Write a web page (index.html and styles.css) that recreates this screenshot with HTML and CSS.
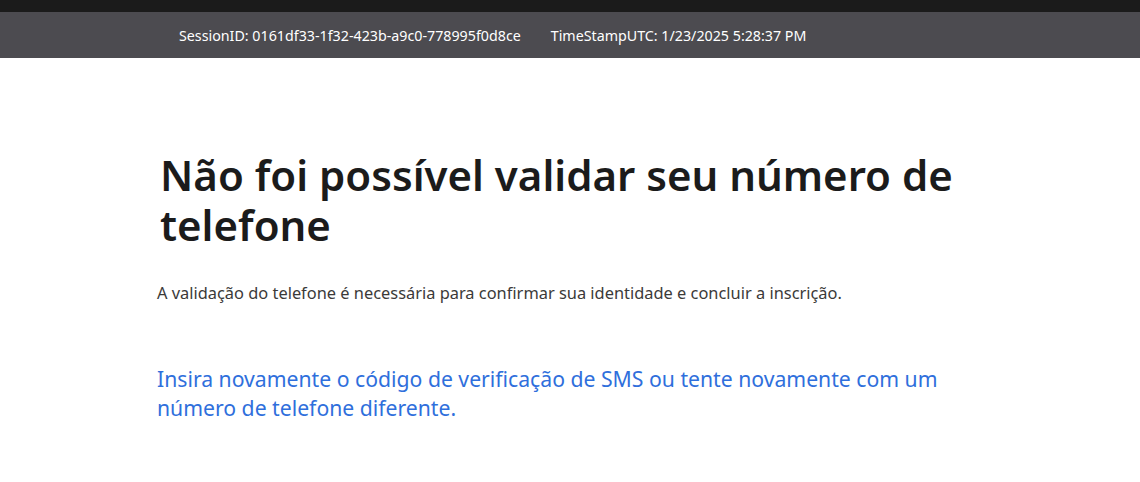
FILE: index.html
```html
<!DOCTYPE html>
<html lang="pt-BR">
<head>
<meta charset="utf-8">
<title>Validação de telefone</title>
<link rel="stylesheet" href="styles.css">
</head>
<body>
<header class="topbar">
  <div class="topbar-strip"></div>
  <div class="session-bar">
    <span class="session-item">SessionID: 0161df33-1f32-423b-a9c0-778995f0d8ce</span>
    <span class="session-item">TimeStampUTC: 1/23/2025 5:28:37 PM</span>
  </div>
</header>
<main class="content">
  <h1 class="title">Não foi possível validar seu número de telefone</h1>
  <p class="desc">A validação do telefone é necessária para confirmar sua identidade e concluir a inscrição.</p>
  <p class="retry">Insira novamente o código de verificação de SMS ou tente novamente com um número de telefone diferente.</p>
</main>
</body>
</html>
```

FILE: styles.css
```css
html, body {
  margin: 0;
  padding: 0;
  background: #ffffff;
  font-family: "Noto Sans", "Open Sans", sans-serif;
}

.topbar-strip {
  height: 12px;
  background: #1b1b1b;
}

.session-bar {
  height: 46px;
  background: #4c4b50;
  display: flex;
  align-items: center;
  gap: 30px;
  padding-left: 179px;
  color: #ffffff;
  font-size: 14.25px;
}

.content {
  padding-left: 157px;
  width: 810px;
}

.title {
  margin: 92px 0 0 3px;
  font-size: 42px;
  line-height: 50px;
  font-weight: 600;
  color: #1b1b1b;
}

.desc {
  margin: 32px 0 0 0;
  font-size: 16.4px;
  line-height: 22px;
  color: #3b3a39;
}

.retry {
  margin: 60px 0 0 0;
  font-size: 21.2px;
  line-height: 29px;
  color: #2f6fdc;
}
```
